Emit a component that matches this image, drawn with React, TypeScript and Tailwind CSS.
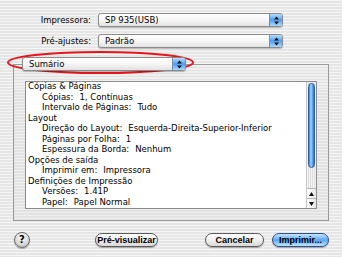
import React from "react";

const font = { fontFamily: '"DejaVu Sans", "Liberation Sans", sans-serif' };

function Arrows() {
  return (
    <svg width="5" height="9" viewBox="0 0 5 9">
      <path d="M2.5 0.5 L5 3.5 L0 3.5 Z" fill="#111" />
      <path d="M0 5.5 L5 5.5 L2.5 8.5 Z" fill="#111" />
    </svg>
  );
}

function Popup({ text, width }: { text: string; width: string }) {
  return (
    <div
      className={`flex h-[14px] ${width} rounded-[3px] border border-[#8a8a8a] bg-gradient-to-b from-white via-[#f6f6f6] to-[#e2e2e2] shadow-[0_1px_1px_rgba(0,0,0,0.25)]`}
    >
      <span className="flex-1 whitespace-nowrap pl-[6px] text-[8.5px] leading-[12px] text-black">{text}</span>
      <span className="flex w-[13px] items-center justify-center rounded-r-[2px] border-l border-[#6d8fb8] bg-gradient-to-b from-[#b7dcff] via-[#4f9cf2] to-[#a9dbff]">
        <Arrows />
      </span>
    </div>
  );
}

function Capsule({ text, width, blue = false }: { text: string; width: string; blue?: boolean }) {
  return (
    <div
      className={`flex h-[14px] ${width} items-center justify-center rounded-full border ${
        blue
          ? "border-[#2a4f8a] bg-gradient-to-b from-[#c9e6ff] via-[#5aa6f5] to-[#bfe6ff]"
          : "border-[#5a5a5a] bg-gradient-to-b from-white via-[#f0f0f0] to-[#d8d8d8]"
      } shadow-[0_1px_1px_rgba(0,0,0,0.3)]`}
    >
      <span
        style={{ fontFamily: '"Liberation Sans", Arial, sans-serif' }}
        className="whitespace-nowrap text-[9px] font-bold leading-none text-black"
      >
        {text}
      </span>
    </div>
  );
}

const lines: { t: string; v?: string; indent?: boolean }[] = [
  { t: "Cópias & Páginas" },
  { t: "Cópias:", v: "1, Contínuas", indent: true },
  { t: "Intervalo de Páginas:", v: "Tudo", indent: true },
  { t: "Layout" },
  { t: "Direção do Layout:", v: "Esquerda-Direita-Superior-Inferior", indent: true },
  { t: "Páginas por Folha:", v: "1", indent: true },
  { t: "Espessura da Borda:", v: "Nenhum", indent: true },
  { t: "Opções de saída" },
  { t: "Imprimir em:", v: "Impressora", indent: true },
  { t: "Definições de Impressão" },
  { t: "Versões:", v: "1.41P", indent: true },
  { t: "Papel:", v: "Papel Normal", indent: true },
  { t: "Resolução:", v: "Normal", indent: true },
];

export default function App() {
  return (
    <div
      style={font}
      className="relative flex h-[257px] w-[342px] flex-col overflow-hidden bg-[repeating-linear-gradient(180deg,#f6f6f6_0px,#f6f6f6_1.5px,#e6e6e6_1.5px,#e6e6e6_3px)] text-black"
    >
      <div className="mt-[13px] flex flex-col gap-[7px]">
        <div className="flex items-center">
          <span className="w-[91px] text-right text-[8.5px] leading-none">Impressora:</span>
          <div className="ml-[7px]">
            <Popup text="SP 935(USB)" width="w-[185px]" />
          </div>
        </div>
        <div className="flex items-center">
          <span className="w-[91px] text-right text-[8.5px] leading-none">Pré-ajustes:</span>
          <div className="ml-[7px]">
            <Popup text="Padrão" width="w-[185px]" />
          </div>
        </div>
      </div>

      <div className="ml-[13px] mt-[9px] flex w-[316px] flex-col">
        <div className="relative z-10 ml-[9px]">
          <Popup text="Sumário" width="w-[164px]" />
        </div>
        <div className="-mt-[7px] h-[157px] border border-[#9a9a9a] bg-[repeating-linear-gradient(180deg,#efefef_0px,#efefef_1.5px,#e2e2e2_1.5px,#e2e2e2_3px)] px-[11px] pb-[11px] pt-[16px]">
          <div className="flex h-full border border-[#8c8c8c] bg-white">
            <div className="flex-1 overflow-hidden pl-[2px]">
              <div className="-mt-[1px]">
                {lines.map((l, i) => (
                  <div key={i} className={`whitespace-nowrap text-[8.5px] leading-[10.5px] ${l.indent ? "pl-[14px]" : ""}`}>
                    {l.t}
                    {l.v && <span className="ml-[6px]">{l.v}</span>}
                  </div>
                ))}
              </div>
            </div>
            <div className="flex w-[10px] flex-col border-l border-[#c8c8c8] bg-[repeating-linear-gradient(90deg,#f2f2f2_0px,#f2f2f2_1px,#e0e0e0_1px,#e0e0e0_2px)]">
              <div className="flex-1 px-[1px] pt-[1px]">
                <div className="h-[85px] rounded-full border border-[#2b5c9e] bg-[linear-gradient(90deg,#3e7fd8,#a6d6ff_40%,#5aa3f3_70%,#2f72cc)]" />
              </div>
              <div className="flex h-[10px] items-center justify-center border-t border-[#b8b8b8] bg-gradient-to-r from-white to-[#e6e6e6]">
                <svg width="5" height="4" viewBox="0 0 5 4">
                  <path d="M2.5 0 L5 4 L0 4 Z" fill="#111" />
                </svg>
              </div>
              <div className="flex h-[10px] items-center justify-center border-t border-[#b8b8b8] bg-gradient-to-r from-white to-[#e6e6e6]">
                <svg width="5" height="4" viewBox="0 0 5 4">
                  <path d="M0 0 L5 0 L2.5 4 Z" fill="#111" />
                </svg>
              </div>
            </div>
          </div>
        </div>
      </div>

      <div className="mt-[11px] flex items-center pl-[14px]">
        <div className="flex h-[16px] w-[16px] items-center justify-center rounded-full border border-[#6a6a6a] bg-[radial-gradient(circle_at_50%_30%,#ffffff,#d8d8d8_60%,#a8a8a8)] shadow-[0_1px_1px_rgba(0,0,0,0.3)]">
          <span className="text-[10px] font-bold leading-none">?</span>
        </div>
        <div className="ml-[65px]">
          <Capsule text="Pré-visualizar" width="w-[63px]" />
        </div>
        <div className="ml-[47px]">
          <Capsule text="Cancelar" width="w-[59px]" />
        </div>
        <div className="ml-[8px]">
          <Capsule text="Imprimir..." width="w-[57px]" blue />
        </div>
      </div>

      <svg className="pointer-events-none absolute left-0 top-0" width="342" height="257">
        <ellipse cx="100.5" cy="62.5" rx="92.5" ry="10.5" fill="none" stroke="#e8141a" strokeWidth="2" />
      </svg>
    </div>
  );
}
